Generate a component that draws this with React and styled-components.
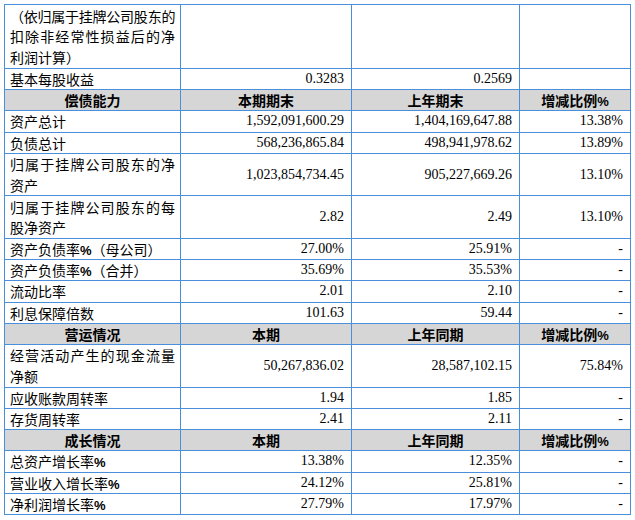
import React from "react";
import styled, { createGlobalStyle } from "styled-components";

const GlobalStyle = createGlobalStyle`
  body {
    margin: 0;
    background: #fff;
    color: #000;
  }
`;

const Page = styled.div`
  padding: 4px 0 0 4px;
`;

const Sheet = styled.table`
  width: 626px;
  table-layout: fixed;
  border-collapse: collapse;
  font-size: 14px;
  line-height: 20px;
`;

const Col = styled.col`
  width: ${(p) => p.$w}px;
`;

// each text line of the source table takes about 21.26px
const Row = styled.tr`
  height: ${(p) => p.$lines * 21.26}px;
`;

const Cell = styled.td`
  border: 1px solid #4a8fdb;
  padding: 0 7px;
  vertical-align: middle;
  white-space: nowrap;
`;

const Label = styled(Cell)`
  padding-left: 5px;
  padding-right: 5px;
  white-space: normal;
  text-align: justify;
  font-family: "Noto Sans CJK SC", sans-serif;
  line-height: ${(p) => (p.$lines > 1 ? "20.5px" : "20px")};
`;

const Num = styled(Cell)`
  text-align: right;
  font-family: "Liberation Serif", "Noto Sans CJK SC", serif;
`;

const Head = styled.th`
  border: 1px solid #4a8fdb;
  padding: 0 4px;
  background: #d6d6d6;
  text-align: center;
  font-family: "Noto Sans CJK SC", sans-serif;
  font-weight: 700;
`;

// first line of the top label is squeezed so 12 chars fit, then spread out
const FullLine = styled.span`
  display: block;
  letter-spacing: -0.4px;
  text-align-last: justify;
`;

const Pct = styled.span`
  font-family: "Liberation Sans", sans-serif;
  font-weight: 700;
  font-size: 13px;
  line-height: 1;
`;

const withPct = (text) =>
  text.split("%").flatMap((part, i) =>
    i === 0 ? [part] : [<Pct key={i}>%</Pct>, part]
  );

const rows = [
  {
    lines: 3,
    label: (
      <>
        <FullLine>（依归属于挂牌公司股东的</FullLine>
        扣除非经常性损益后的净利润计算）
      </>
    ),
    values: ["", "", ""],
  },
  { label: "基本每股收益", values: ["0.3283", "0.2569", ""] },
  { head: ["偿债能力", "本期期末", "上年期末", "增减比例%"] },
  { label: "资产总计", values: ["1,592,091,600.29", "1,404,169,647.88", "13.38%"] },
  { label: "负债总计", values: ["568,236,865.84", "498,941,978.62", "13.89%"] },
  {
    lines: 2,
    label: "归属于挂牌公司股东的净资产",
    values: ["1,023,854,734.45", "905,227,669.26", "13.10%"],
  },
  {
    lines: 2,
    label: "归属于挂牌公司股东的每股净资产",
    values: ["2.82", "2.49", "13.10%"],
  },
  { label: "资产负债率%（母公司）", values: ["27.00%", "25.91%", "-"] },
  { label: "资产负债率%（合并）", values: ["35.69%", "35.53%", "-"] },
  { label: "流动比率", values: ["2.01", "2.10", "-"] },
  { label: "利息保障倍数", values: ["101.63", "59.44", "-"] },
  { head: ["营运情况", "本期", "上年同期", "增减比例%"] },
  {
    lines: 2,
    label: "经营活动产生的现金流量净额",
    values: ["50,267,836.02", "28,587,102.15", "75.84%"],
  },
  { label: "应收账款周转率", values: ["1.94", "1.85", "-"] },
  { label: "存货周转率", values: ["2.41", "2.11", "-"] },
  { head: ["成长情况", "本期", "上年同期", "增减比例%"] },
  { label: "总资产增长率%", values: ["13.38%", "12.35%", "-"] },
  { label: "营业收入增长率%", values: ["24.12%", "25.81%", "-"] },
  { label: "净利润增长率%", values: ["27.79%", "17.97%", "-"] },
];

const widths = [176, 171, 168, 111];

const App = () => {
  return (
    <Page>
      <GlobalStyle />
      <Sheet>
        <colgroup>
          {widths.map((w) => (
            <Col key={w} $w={w} />
          ))}
        </colgroup>
        <tbody>
          {rows.map((row, i) =>
            row.head ? (
              <Row key={i} $lines={1}>
                {row.head.map((h) => (
                  <Head key={h}>{withPct(h)}</Head>
                ))}
              </Row>
            ) : (
              <Row key={i} $lines={row.lines || 1}>
                <Label $lines={row.lines || 1}>
                  {typeof row.label === "string" ? withPct(row.label) : row.label}
                </Label>
                {row.values.map((v, j) => (
                  <Num key={j}>{v}</Num>
                ))}
              </Row>
            )
          )}
        </tbody>
      </Sheet>
    </Page>
  );
};

export default App;
